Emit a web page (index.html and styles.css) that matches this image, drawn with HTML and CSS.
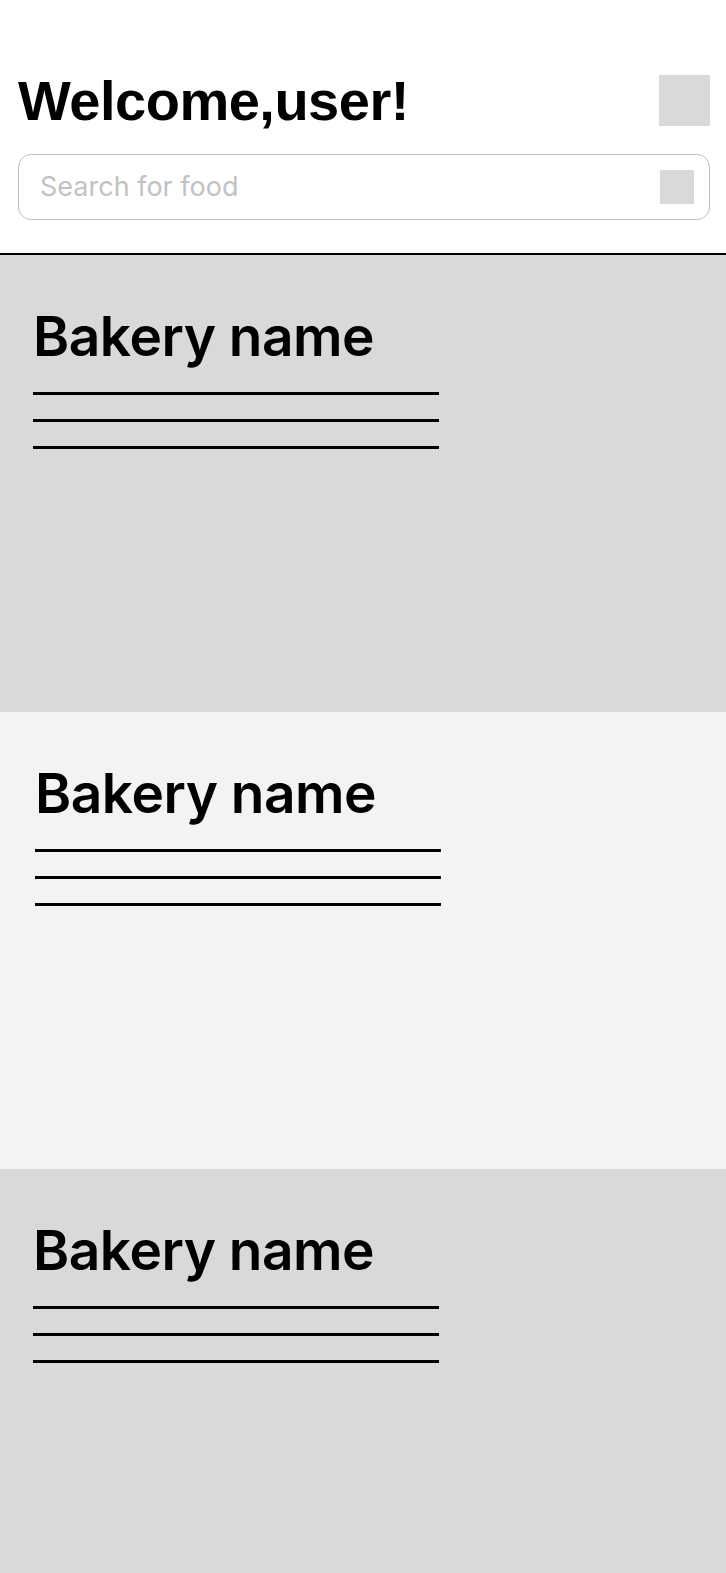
FILE: index.html
```html
<!DOCTYPE html>
<html lang="en">
<head>
    <meta charset="UTF-8">
    <meta name="viewport" content="width=device-width, initial-scale=1.0">
    <title>Bakeries</title>
    <link rel="stylesheet" href="styles.css">
</head>
<body>
    <header class="top">
        <div class="top-row">
            <h1 class="welcome">Welcome,user!</h1>
            <div class="avatar"></div>
        </div>
        <div class="search">
            <input type="text" class="search-input" placeholder="Search for food">
            <div class="search-icon"></div>
        </div>
    </header>

    <main>
        <section class="bakery dark">
            <h2>Bakery name</h2>
            <div class="lines">
                <span></span>
                <span></span>
                <span></span>
            </div>
        </section>
        <section class="bakery light">
            <h2>Bakery name</h2>
            <div class="lines">
                <span></span>
                <span></span>
                <span></span>
            </div>
        </section>
        <section class="bakery dark">
            <h2>Bakery name</h2>
            <div class="lines">
                <span></span>
                <span></span>
                <span></span>
            </div>
        </section>
    </main>
</body>
</html>
```

FILE: styles.css
```css
/* Base */
* {
    margin: 0;
    padding: 0;
    box-sizing: border-box;
}

body {
    background-color: #fff;
    color: #000;
    font-family: 'Inter', 'Liberation Sans', sans-serif;
}

/* Header */
.top {
    padding: 75px 16px 33px 18px;
    border-bottom: 2px solid #000;
}

.top-row {
    display: flex;
    justify-content: space-between;
    align-items: center;
}

.welcome {
    font-family: 'Liberation Sans', Arial, sans-serif;
    font-size: 56px;
    font-weight: 700;
    line-height: 51px;
    letter-spacing: -0.5px;
}

.avatar {
    width: 51px;
    height: 51px;
    background-color: #d9d9d9;
}

.search {
    margin-top: 28px;
    height: 66px;
    border: 1.5px solid #bfbfbf;
    border-radius: 13px;
    display: flex;
    align-items: center;
    padding: 0 15px 0 21px;
}

.search-input {
    flex: 1;
    border: none;
    outline: none;
    background: transparent;
    font-family: 'Inter', sans-serif;
    font-size: 27px;
    color: #333;
    margin-top: -2px;
}

.search-input::placeholder {
    color: #c2c2c2;
}

.search-icon {
    width: 34px;
    height: 34px;
    background-color: #d9d9d9;
}

/* Bakery cards */
.bakery {
    height: 457px;
    padding: 51px 33px 0 33px;
}

.bakery.dark {
    background-color: #d9d9d9;
}

.bakery.light {
    background-color: #f3f3f3;
    padding-left: 35px;
}

.bakery h2 {
    font-size: 55px;
    font-weight: 600;
    line-height: 60px;
    letter-spacing: -0.5px;
}

.lines {
    margin-top: 26px;
    width: 406px;
    display: flex;
    flex-direction: column;
    gap: 24px;
}

.lines span {
    display: block;
    height: 3px;
    background-color: #000;
}
```
